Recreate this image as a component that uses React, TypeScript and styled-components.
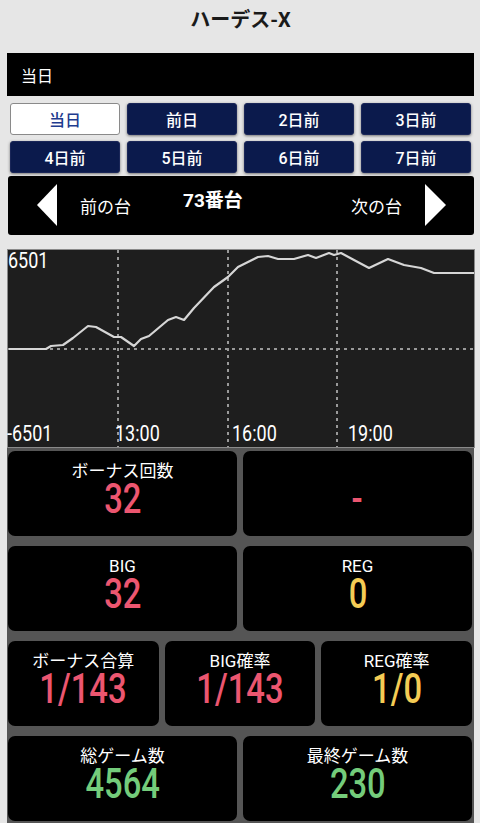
import React from "react";
import styled, { createGlobalStyle } from "styled-components";

const GlobalStyle = createGlobalStyle`
  html, body {
    margin: 0;
    padding: 0;
    background: #e6e6e6;
  }
  body {
    font-family: Roboto, "Noto Sans CJK JP", sans-serif;
  }
`;

const Page = styled.div`
  width: 480px;
  min-height: 823px;
  display: flex;
  flex-direction: column;
  padding: 0 6px 0 7px;
  box-sizing: border-box;
`;

const Title = styled.h1`
  margin: 0;
  height: 53px;
  padding-top: 8px;
  box-sizing: border-box;
  text-align: center;
  font-size: 20px;
  line-height: 24px;
  font-weight: 700;
  color: #1a1a1a;
`;

const DayBar = styled.div`
  height: 43px;
  background: #000;
  color: #fff;
  font-size: 16px;
  display: flex;
  align-items: center;
  padding-left: 14px;
`;

const DayGrid = styled.div`
  display: grid;
  grid-template-columns: repeat(4, 1fr);
  gap: 6px 7px;
  padding: 7px 3px 0 3px;
`;

const DayButton = styled.button<{ $active?: boolean }>`
  height: 32px;
  border-radius: 3px;
  font-family: inherit;
  font-size: 16px;
  font-weight: 500;
  cursor: pointer;
  padding: 0;
  background: ${(p) => (p.$active ? "#fff" : "#0b1a4c")};
  color: ${(p) => (p.$active ? "#1f3c8f" : "#fff")};
  border: 1px solid ${(p) => (p.$active ? "#8a8a8a" : "#1a2658")};
  box-shadow: ${(p) => (p.$active ? "none" : "0 1px 3px rgba(0, 0, 0, 0.5)")};
`;

const NavBar = styled.div`
  margin: 3px 0 14px 1px;
  height: 59px;
  background: #000;
  border-radius: 3px;
  color: #fff;
  display: flex;
  align-items: center;
  padding: 0 28px 0 29px;
`;

const Arrow = styled.div<{ $dir: "left" | "right" }>`
  width: 0;
  height: 0;
  border-top: 21px solid transparent;
  border-bottom: 21px solid transparent;
  ${(p) =>
    p.$dir === "left"
      ? "border-right: 20px solid #fff;"
      : "border-left: 21px solid #fff;"}
  margin-top: -2px;
`;

const NavLabel = styled.span<{ $push?: boolean }>`
  font-size: 17px;
  margin: 0 23px;
  ${(p) => (p.$push ? "margin-left: auto;" : "")}
`;

const Machine = styled.span`
  font-size: 19px;
  font-weight: 700;
  margin: -15px 0 0 29px;
`;

const ChartBox = styled.div`
  height: 199px;
  background: #1e1e1e;
  border: 1px solid #8a8a8a;
  box-sizing: border-box;
  width: 468px;

  svg {
    display: block;
    overflow: visible;
  }
`;

const StatsPanel = styled.div`
  flex: 1;
  background: #555;
  display: flex;
  flex-direction: column;
  gap: 10px;
  padding: 3px 2px 3px 1px;
`;

const StatRow = styled.div<{ $cols: number }>`
  display: grid;
  grid-template-columns: repeat(${(p) => p.$cols}, 1fr);
  gap: 6px;
`;

const Card = styled.div`
  height: 85px;
  background: #000;
  border-radius: 7px;
  display: flex;
  flex-direction: column;
  align-items: center;
  padding-top: 10px;
  box-sizing: border-box;
`;

const CardLabel = styled.div`
  color: #fff;
  font-size: 17px;
  line-height: 20px;
  height: 20px;
  white-space: nowrap;
`;

const CardValue = styled.div<{ $color: string }>`
  color: ${(p) => p.$color};
  font-size: 42px;
  font-weight: 500;
  line-height: 36px;
  transform: scaleX(0.78);
  white-space: nowrap;
`;

const PINK = "#ec5670";
const YELLOW = "#f4cc55";
const GREEN = "#74cc7b";

const days = ["当日", "前日", "2日前", "3日前", "4日前", "5日前", "6日前", "7日前"];

const points: [number, number][] = [
  [1, 100], [38, 100], [43, 97], [55, 96], [65, 89], [80, 77], [88, 78],
  [106, 88], [113, 88], [126, 97], [133, 90], [141, 87], [160, 71], [168, 68],
  [176, 71], [186, 59], [206, 38], [220, 28], [230, 18], [250, 8], [260, 7],
  [270, 10], [286, 10], [300, 6], [308, 9], [321, 4], [326, 6], [333, 4],
  [346, 11], [361, 19], [380, 10], [396, 16], [413, 19], [426, 24], [466, 24],
];

const ChartLabel: React.FC<{ x: number; y: number; children: string }> = ({ x, y, children }) => (
  <text
    transform={`translate(${x} ${y}) scale(1 1.18)`}
    fill="#fff"
    fontSize="18"
    fontFamily="Roboto, sans-serif"
  >
    {children}
  </text>
);

const Chart = () => (
  <ChartBox>
    <svg width="466" height="197" viewBox="0 0 466 197">
      <g stroke="#9a9a9a" strokeWidth="2" strokeDasharray="3 4">
        <line x1="0" y1="99" x2="466" y2="99" />
        <line x1="110" y1="0" x2="110" y2="197" />
        <line x1="220" y1="0" x2="220" y2="197" />
        <line x1="329" y1="0" x2="329" y2="197" />
      </g>
      <polyline
        points={points.map(([x, y]) => `${x},${y - 1}`).join(" ")}
        fill="none"
        stroke="#d6d6d6"
        strokeWidth="2.2"
        strokeLinejoin="round"
      />
      <ChartLabel x={0} y={18}>6501</ChartLabel>
      <ChartLabel x={-1} y={191}>-6501</ChartLabel>
      <ChartLabel x={107} y={191}>13:00</ChartLabel>
      <ChartLabel x={224} y={191}>16:00</ChartLabel>
      <ChartLabel x={340} y={191}>19:00</ChartLabel>
    </svg>
  </ChartBox>
);

const Stat: React.FC<{ label: string; value: string; color: string }> = ({ label, value, color }) => (
  <Card>
    <CardLabel>{label || "\u00a0"}</CardLabel>
    <CardValue $color={color}>{value}</CardValue>
  </Card>
);

export default function App() {
  return (
    <>
      <GlobalStyle />
      <Page>
        <Title>ハーデス-X</Title>
        <DayBar>当日</DayBar>
        <DayGrid>
          {days.map((d, i) => (
            <DayButton key={d} $active={i === 0}>
              {d}
            </DayButton>
          ))}
        </DayGrid>
        <NavBar>
          <Arrow $dir="left" />
          <NavLabel>前の台</NavLabel>
          <Machine>73番台</Machine>
          <NavLabel $push>次の台</NavLabel>
          <Arrow $dir="right" />
        </NavBar>
        <Chart />
        <StatsPanel>
          <StatRow $cols={2}>
            <Stat label="ボーナス回数" value="32" color={PINK} />
            <Stat label="" value="-" color={PINK} />
          </StatRow>
          <StatRow $cols={2}>
            <Stat label="BIG" value="32" color={PINK} />
            <Stat label="REG" value="0" color={YELLOW} />
          </StatRow>
          <StatRow $cols={3}>
            <Stat label="ボーナス合算" value="1/143" color={PINK} />
            <Stat label="BIG確率" value="1/143" color={PINK} />
            <Stat label="REG確率" value="1/0" color={YELLOW} />
          </StatRow>
          <StatRow $cols={2}>
            <Stat label="総ゲーム数" value="4564" color={GREEN} />
            <Stat label="最終ゲーム数" value="230" color={GREEN} />
          </StatRow>
        </StatsPanel>
      </Page>
    </>
  );
}
